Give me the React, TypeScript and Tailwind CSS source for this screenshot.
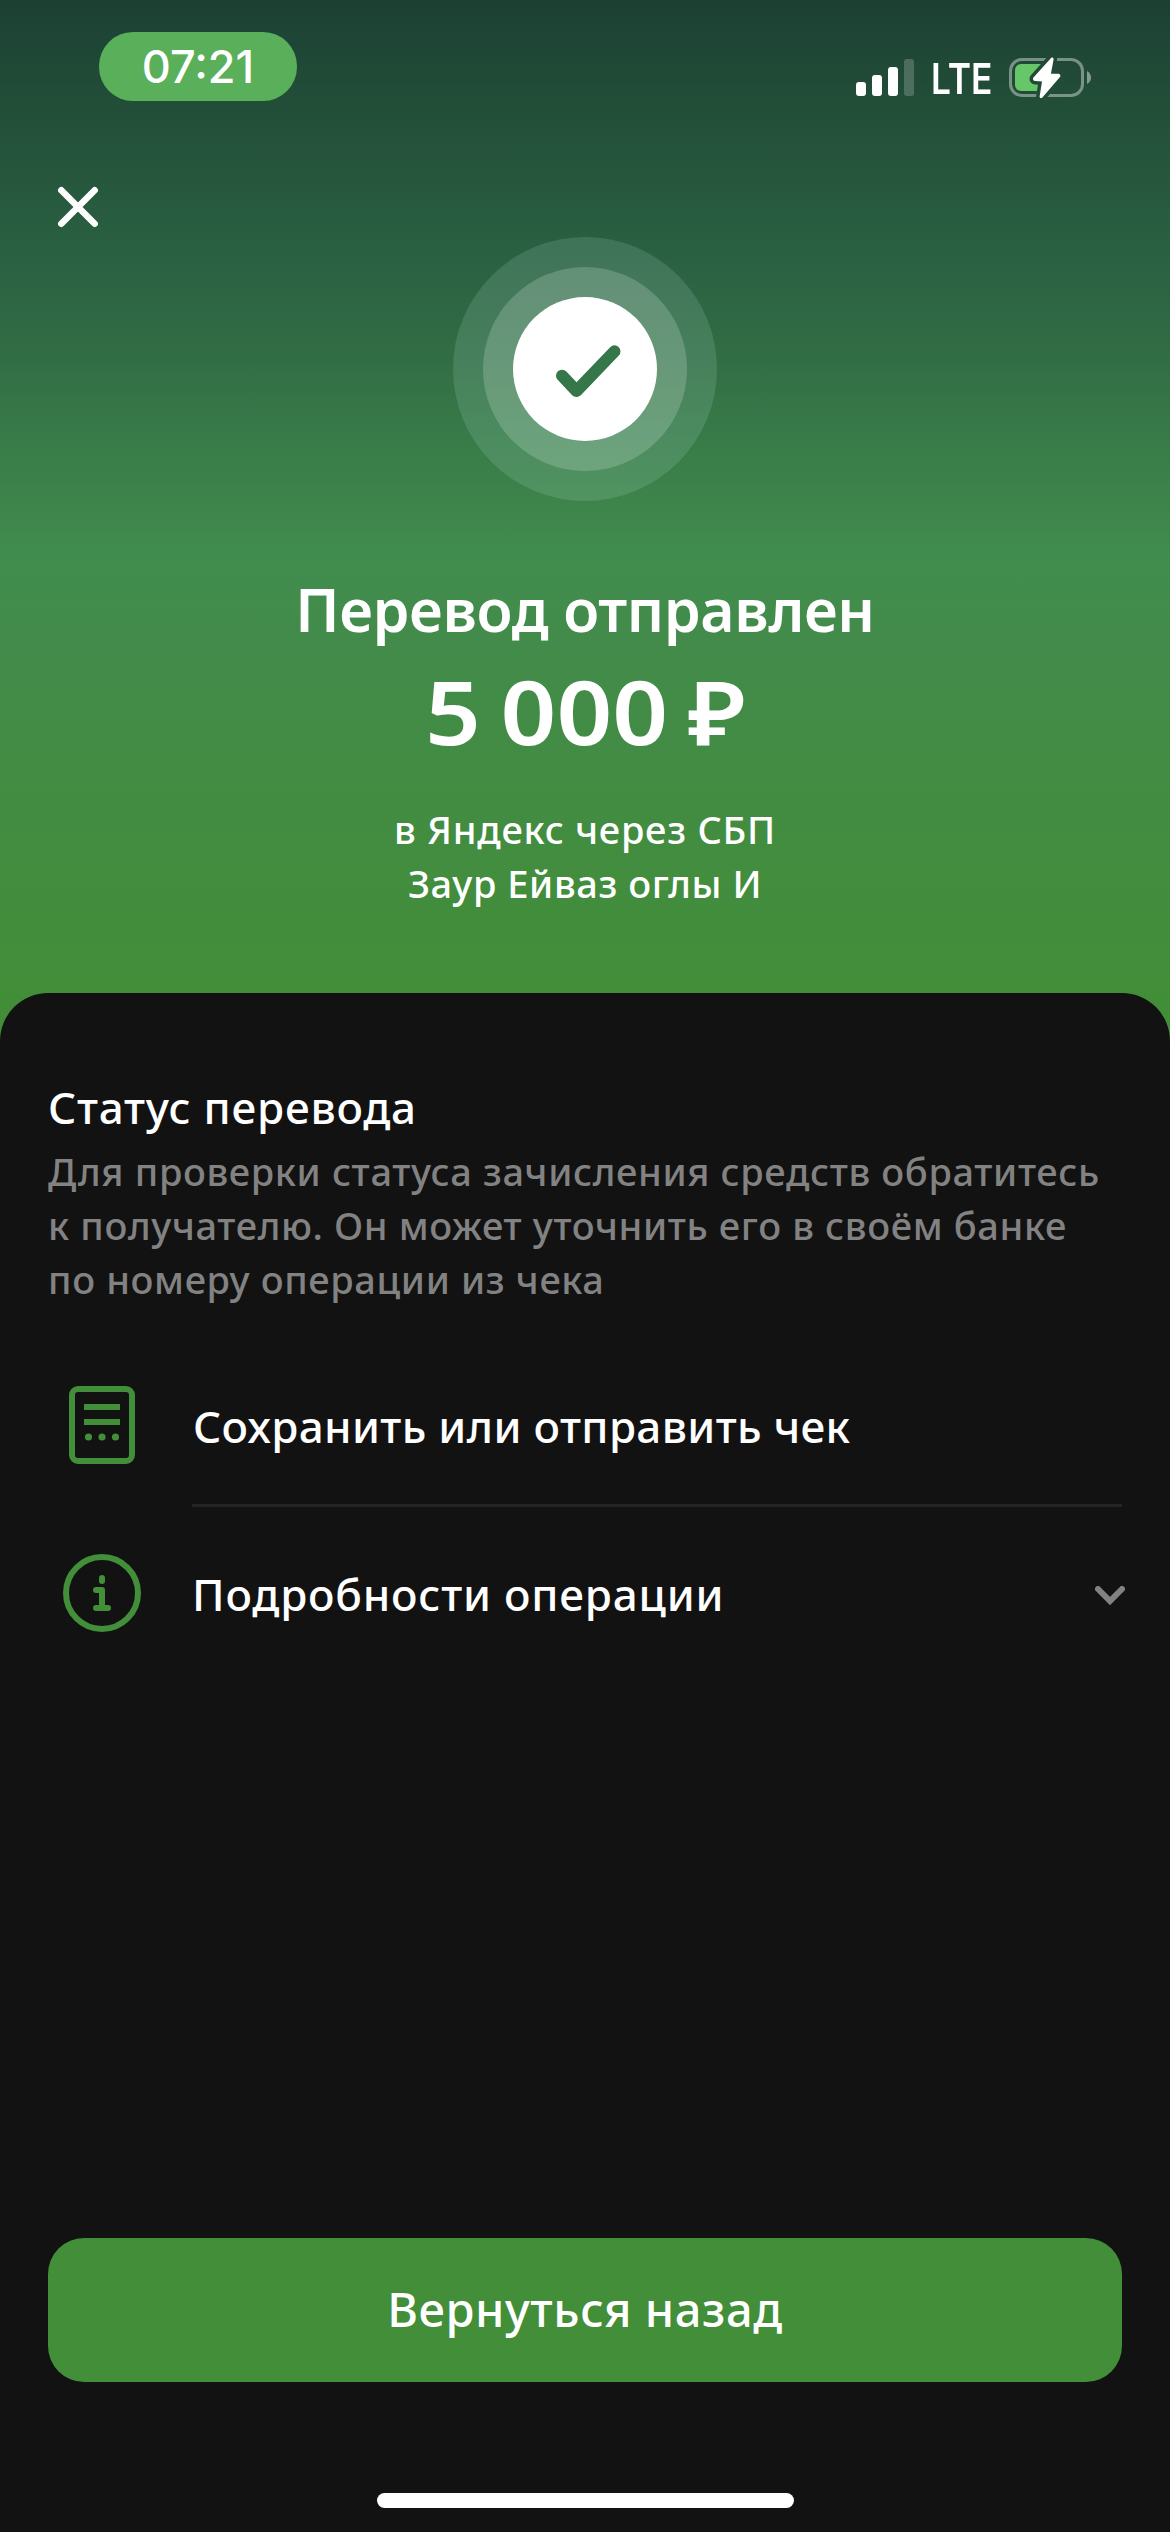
import React from 'react';

const BOLT = 'M42.8 1.6 L25.2 21.2 Q24.6 22.8 26.2 22.9 L34.2 23.4 L31.6 39.6 Q31.8 40.6 32.6 39.9 L50.2 19.4 Q50.8 17.9 49.2 17.8 L40.8 17.4 L43.6 2.2 Q43.6 1 42.8 1.6 Z';

function SignalIcon() {
  return (
    <svg width="58" height="37" viewBox="0 0 58 37" fill="#fff">
      <rect x="0" y="23" width="10" height="14" rx="3" />
      <rect x="16" y="16" width="10" height="21" rx="3" />
      <rect x="32" y="8" width="10" height="29" rx="3" />
      <rect x="48" y="0" width="10" height="37" rx="3" opacity="0.2" />
    </svg>
  );
}

function BatteryIcon() {
  return (
    <svg width="82" height="41" viewBox="0 0 82 41">
      <mask id="bolt-gap" maskUnits="userSpaceOnUse" x="0" y="0" width="82" height="41">
        <rect width="82" height="41" fill="#fff" />
        <path d={BOLT} fill="#000" stroke="#000" strokeWidth="9" strokeLinejoin="round" />
      </mask>
      <g mask="url(#bolt-gap)">
        <rect x="1.5" y="2.5" width="72" height="36" rx="11.5" fill="none" stroke="#fff" strokeOpacity="0.4" strokeWidth="3" />
        <rect x="6" y="7" width="27" height="27" rx="6" fill="#67c668" />
        <rect x="22" y="7" width="11" height="27" fill="#67c668" />
      </g>
      <path d="M78 14 Q82 16.5 82 20.5 Q82 24.5 78 27 Z" fill="#fff" opacity="0.45" />
      <path d={BOLT} fill="#fff" stroke="#fff" strokeWidth="2" strokeLinejoin="round" />
    </svg>
  );
}

function StatusBar() {
  return (
    <div className="flex h-[160px] items-start justify-between pl-[99px] pr-[79px]">
      <div className="mt-8 flex h-[69px] w-[198px] items-center justify-center rounded-[34px] bg-[#5aaf5b] font-['Inter',sans-serif] text-[45px] font-medium leading-[69px]">
        07:21
      </div>
      <div className="mt-[47px] flex h-[61px] items-center">
        <SignalIcon />
        <div className="ml-[19px] mt-[2px] w-[57px]">
          <span className="-ml-[2px] block w-[80px] origin-left scale-x-[0.84] font-['Inter',sans-serif] text-[42px] font-semibold leading-[60px]">
            LTE
          </span>
        </div>
        <div className="ml-[19px]">
          <BatteryIcon />
        </div>
      </div>
    </div>
  );
}

function SuccessBadge() {
  return (
    <div className="mx-auto mt-[6px] flex size-[264px] items-center justify-center rounded-full bg-[#dcfff4]/13">
      <div className="flex size-[204px] items-center justify-center rounded-full bg-[#f4fffa]/19">
        <div className="flex size-36 items-center justify-center rounded-full bg-white">
          <svg width="144" height="144" viewBox="0 0 144 144" fill="none">
            <path d="M49 78.7 L63.5 94 L101.5 54.3" stroke="#36774a" strokeWidth="12" strokeLinecap="round" strokeLinejoin="round" />
          </svg>
        </div>
      </div>
    </div>
  );
}

function ReceiptIcon() {
  return (
    <svg width="78" height="78" viewBox="0 0 78 78" fill="none">
      <rect x="9" y="3" width="60" height="72" rx="6" stroke="#428e39" strokeWidth="6" />
      <path d="M21 21H57M21 36H57" stroke="#428e39" strokeWidth="6" />
      <g fill="#428e39">
        <circle cx="25.5" cy="51" r="3.6" />
        <circle cx="39" cy="51" r="3.6" />
        <circle cx="52.5" cy="51" r="3.6" />
      </g>
    </svg>
  );
}

function InfoIcon() {
  return (
    <svg width="78" height="78" viewBox="0 0 78 78" fill="none" stroke="#428e39" strokeWidth="6">
      <circle cx="39" cy="39" r="36" />
      <path d="M39 24V27M33 36H39V54M33 54H45" strokeLinecap="round" strokeLinejoin="round" />
    </svg>
  );
}

export default function App() {
  return (
    <div className="flex h-[2532px] w-[1170px] flex-col overflow-hidden bg-[linear-gradient(to_bottom,#1c4033_0px,#235039_120px,#2a6042_250px,#316c44_350px,#387b49_440px,#3e854b_510px,#408d4e_560px,#438b4a_640px,#428c43_780px,#428e38_1000px)] font-['Noto_Sans',sans-serif] font-medium text-white">
      <StatusBar />
      <button className="ml-[54px] mt-[23px] size-12" aria-label="Закрыть">
        <svg width="48" height="48" viewBox="0 0 48 48" stroke="#fff" strokeWidth="6.5" strokeLinecap="round">
          <path d="M7.3 7.3L40.7 40.7M40.7 7.3L7.3 40.7" />
        </svg>
      </button>
      <SuccessBadge />
      <div className="flex flex-col items-center text-center">
        <h1 className="mt-[72px] text-[59px] font-semibold leading-[72px] tracking-[-0.36px]">Перевод отправлен</h1>
        <div className="mt-4 scale-x-[1.11] text-[88px] font-semibold leading-[100px] [word-spacing:-5.3px]">5 000 ₽</div>
        <div className="mt-[41px] text-[38px] leading-[54px]">
          <div className="tracking-[0.76px]">в Яндекс через СБП</div>
          <div className="tracking-[0.57px]">Заур Ейваз оглы И</div>
        </div>
      </div>
      <main className="mt-[83px] flex flex-1 flex-col rounded-t-[48px] bg-[#121212] px-12 pb-6 pt-[84px]">
        <h2 className="text-[44px] leading-[60px] tracking-[0.78px]">Статус перевода</h2>
        <p className="mt-[7px] whitespace-nowrap text-[38px] leading-[54px] tracking-[0.63px] text-[#828282]">
          Для проверки статуса зачисления средств обратитесь
          <br />
          к получателю. Он может уточнить его в своём банке
          <br />
          по номеру операции из чека
        </p>
        <div className="mt-[35px] flex h-[163px] items-center pl-[15px] pt-[5px]">
          <ReceiptIcon />
          <span className="ml-[52px] mt-[2px] text-[44px] leading-[60px] tracking-[0.35px]">Сохранить или отправить чек</span>
        </div>
        <div className="ml-36 h-[3px] bg-[#242424]" />
        <div className="-mr-[3px] flex h-[172px] items-center pl-[15px]">
          <InfoIcon />
          <span className="ml-[51px] mt-[2px] flex-1 text-[44px] leading-[60px] tracking-[0.79px]">Подробности операции</span>
          <svg width="30" height="20" viewBox="0 0 30 20" className="mt-[5px]" fill="none" stroke="#828282" strokeWidth="6" strokeLinecap="round">
            <path d="M3 3L15 15L27 3" />
          </svg>
        </div>
        <div className="flex-1" />
        <button className="flex h-36 w-full items-center justify-center rounded-[36px] bg-[#428e39] pb-[2px] text-[47px] tracking-[0.58px]">
          Вернуться назад
        </button>
        <div className="mx-auto mt-[111px] h-[15px] w-[417px] rounded-full bg-white" />
      </main>
    </div>
  );
}
